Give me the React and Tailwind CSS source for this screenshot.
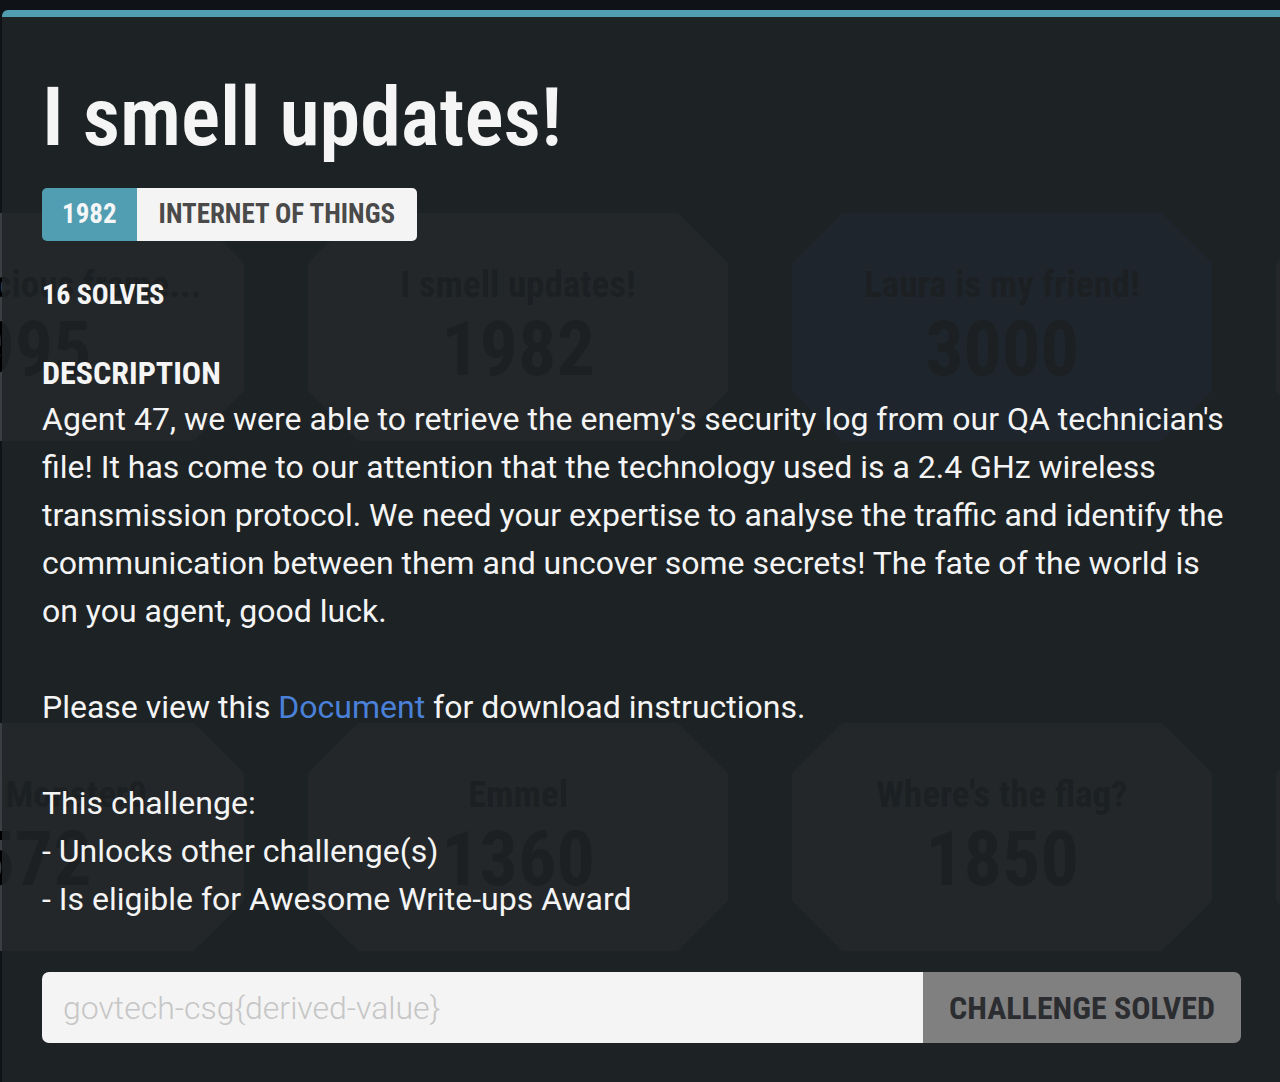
import React from "react";

const HEAD = "font-['Roboto','Liberation_Sans',sans-serif] [font-stretch:75%]";
const BODY = "font-['Roboto','Liberation_Sans',sans-serif]";

const cards = [
  { title: "The malicious frame...", pts: "995", blue: false },
  { title: "I smell updates!", pts: "1982", blue: false },
  { title: "Laura is my friend!", pts: "3000", blue: true },
  { title: "Hidden", pts: "2000", blue: false },
  { title: "Cook Monster0", pts: "572", blue: false },
  { title: "Emmel", pts: "1360", blue: false },
  { title: "Where's the flag?", pts: "1850", blue: false },
  { title: "Hidden", pts: "2000", blue: false },
];

function Card({ title, pts, blue }) {
  return (
    <div
      className={`h-[228px] w-[420px] flex flex-col items-center pt-[53px] [clip-path:polygon(12%_0,88%_0,100%_22%,100%_78%,88%_100%,12%_100%,0_78%,0_22%)] ${
        blue ? "bg-[#172c59]" : "bg-[#3b3f44]"
      }`}
    >
      <div className={`${HEAD} font-bold text-[37px] leading-none text-black whitespace-nowrap`}>{title}</div>
      <div className={`${HEAD} font-bold text-[76px] leading-none mt-[8px] text-black`}>{pts}</div>
    </div>
  );
}

export default function App() {
  const lines = [
    "Agent 47, we were able to retrieve the enemy's security log from our QA technician's",
    "file! It has come to our attention that the technology used is a 2.4 GHz wireless",
    "transmission protocol. We need your expertise to analyse the traffic and identify the",
    "communication between them and uncover some secrets! The fate of the world is",
    "on you agent, good luck.",
  ];
  return (
    <div className="relative w-[1280px] h-[1082px] overflow-hidden bg-[#0f1217]">
      {/* background challenge grid */}
      <div className="ml-[-176px] pt-[213px] grid grid-cols-[420px_420px_420px_420px] gap-x-[64px] gap-y-[282px] w-[1900px]">
        {cards.map((c, i) => (
          <Card key={i} {...c} />
        ))}
      </div>

      {/* modal */}
      <div className="absolute left-[2px] top-[10px] w-[1300px] h-[1100px] rounded-tl-[6px] border-t-[7px] border-[#519db1] bg-[rgba(32,36,39,0.88)]">
        <div className="pl-[40px] pt-[59px] w-[1239px]">
          <h1 className={`${HEAD} font-semibold text-[82px] leading-none text-[#f5f5f5] whitespace-nowrap`}>
            I smell updates!
          </h1>

          <div className={`mt-[30px] inline-flex h-[53px] rounded-[5px] overflow-hidden ${HEAD} font-bold text-[27px]`}>
            <div className="bg-[#519db1] text-[#f4f6f7] px-[20px] flex items-center">1982</div>
            <div className="bg-[#f4f4f4] text-[#4a4a4a] pl-[22px] pr-[22px] flex items-center">INTERNET OF THINGS</div>
          </div>

          <div className={`mt-[40px] ${HEAD} font-bold text-[28px] leading-none text-[#f5f5f5]`}>16 SOLVES</div>

          <div className={`mt-[48px] ${HEAD} font-bold text-[32px] leading-none text-[#f5f5f5]`}>DESCRIPTION</div>

          <div className={`mt-[6px] ${BODY} text-[32px] leading-[48px] text-[#f4f4f4]`}>
            {lines.map((l, i) => (
              <div key={i} className="whitespace-nowrap">{l}</div>
            ))}
            <div className="h-[48px]" />
            <div className="whitespace-nowrap">
              Please view this <span className="text-[#4a80d8]">Document</span> for download instructions.
            </div>
            <div className="h-[48px]" />
            <div className="whitespace-nowrap">This challenge:</div>
            <div className="whitespace-nowrap">- Unlocks other challenge(s)</div>
            <div className="whitespace-nowrap">- Is eligible for Awesome Write-ups Award</div>
          </div>

          <div className="mt-[49px] flex h-[71px] w-[1199px] rounded-[7px] overflow-hidden">
            <div className={`flex-1 bg-[#f4f4f4] flex items-center pl-[21px] ${BODY} font-light text-[32px] text-[#c6c6c6]`}>
              govtech-csg{"{"}derived-value{"}"}
            </div>
            <div className={`w-[318px] bg-[#808080] flex items-center justify-center ${HEAD} font-bold text-[32px] text-[#2b2d31]`}>
              CHALLENGE SOLVED
            </div>
          </div>
        </div>
      </div>
    </div>
  );
}
